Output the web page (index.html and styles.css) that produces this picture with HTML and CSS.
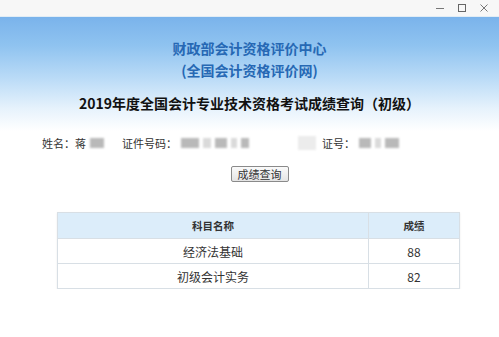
FILE: index.html
```html
<!DOCTYPE html>
<html lang="zh-CN">
<head>
    <meta charset="UTF-8">
    <meta name="viewport" content="width=device-width, initial-scale=1.0">
    <title>成绩查询</title>
    <link rel="stylesheet" href="styles.css">
</head>
<body>
    <div class="titlebar">
        <span class="win-btn">
            <svg width="10" height="10" viewBox="0 0 10 10"><path d="M1 5.5h8" stroke="#777" stroke-width="1"/></svg>
        </span>
        <span class="win-btn">
            <svg width="10" height="10" viewBox="0 0 10 10"><rect x="1.5" y="1.5" width="7" height="7" fill="none" stroke="#666" stroke-width="1"/></svg>
        </span>
        <span class="win-btn">
            <svg width="10" height="10" viewBox="0 0 10 10"><path d="M1.5 1.5l7 7M8.5 1.5l-7 7" stroke="#777" stroke-width="1"/></svg>
        </span>
    </div>

    <div class="banner">
        <h1 class="org">财政部会计资格评价中心</h1>
        <h1 class="org">(全国会计资格评价网)</h1>
        <h2 class="heading">2019年度全国会计专业技术资格考试成绩查询（初级）</h2>
    </div>

    <div class="info">
        <div class="field name">
            <span>姓名：蒋</span>
            <i class="blur w14"></i>
        </div>
        <div class="field idcard">
            <span>证件号码：</span>
            <i class="blur w18"></i>
            <i class="blur w8 light"></i>
            <i class="blur w12"></i>
            <i class="blur w6 light"></i>
            <i class="blur w8"></i>
        </div>
        <div class="field cert">
            <i class="blur w18 faint"></i>
            <span>证号：</span>
            <i class="blur w12"></i>
            <i class="blur w6 light"></i>
            <i class="blur w14"></i>
        </div>
    </div>

    <div class="actions">
        <button>成绩查询</button>
    </div>

    <table class="scores">
        <thead>
            <tr>
                <th>科目名称</th>
                <th class="col-score">成绩</th>
            </tr>
        </thead>
        <tbody>
            <tr>
                <td>经济法基础</td>
                <td class="col-score">88</td>
            </tr>
            <tr>
                <td>初级会计实务</td>
                <td class="col-score">82</td>
            </tr>
        </tbody>
    </table>
</body>
</html>
```

FILE: styles.css
```css
body {
    margin: 0;
    font-family: "Noto Sans CJK SC", "Liberation Sans", sans-serif;
    background: #fff;
    color: #222;
}
.titlebar {
    height: 16px;
    background: #f7f7f7;
    display: flex;
    justify-content: flex-end;
    align-items: center;
    padding-right: 4px;
    border-bottom: 1px solid #e2edf5;
}
.win-btn {
    width: 22px;
    display: flex;
    justify-content: center;
}
.banner {
    background: linear-gradient(180deg, #7ab3eb 0%, #8fc3f0 25%, #bcdcf7 55%, #e6f2fc 80%, #fff 100%);
    padding-top: 20px;
    height: 114px;
    box-sizing: border-box;
    text-align: center;
}
.org {
    margin: 0;
    font-size: 14px;
    line-height: 22px;
    font-weight: bold;
    color: #2668b4;
}
.heading {
    margin: 12px 0 0;
    font-size: 14px;
    line-height: 20px;
    font-weight: bold;
    color: #111;
}
.info {
    display: flex;
    align-items: center;
    height: 22px;
    margin-top: 1px;
    padding-left: 42px;
    font-size: 11px;
    color: #333;
}
.field {
    display: flex;
    align-items: center;
}
.name {
    width: 80px;
}
.idcard {
    width: 172px;
}
.blur {
    display: inline-block;
    height: 10px;
    margin-left: 4px;
    background: #b9b9b9;
    filter: blur(1px);
}
.blur.light {
    background: #dadada;
}
.blur.faint {
    background: #ececec;
    margin-right: 6px;
    height: 14px;
}
.w6 { width: 6px; }
.w8 { width: 8px; }
.w12 { width: 12px; }
.w14 { width: 14px; }
.w18 { width: 18px; }
.actions {
    text-align: center;
    margin-top: 6px;
}
button {
    font-family: inherit;
    font-size: 11px;
    color: #333;
    padding: 0 6px;
    height: 16px;
    line-height: 14px;
    background: linear-gradient(180deg, #fafafa, #e4e4e4);
    border: 1px solid #8a8a8a;
    border-radius: 2px;
    margin-left: 20px;
}
.scores {
    margin: 28px 0 0 57px;
    width: 403px;
    border-collapse: collapse;
    font-size: 12px;
    color: #333;
    box-shadow: 0 1px 2px rgba(0, 0, 0, 0.08);
}
.scores th,
.scores td {
    border: 1px solid #d8dfe5;
    text-align: center;
    height: 24px;
    padding: 0;
}
.scores th {
    background: #dcedfa;
    font-size: 10.5px;
    font-weight: bold;
    height: 25px;
}
.col-score {
    width: 90px;
}
```
